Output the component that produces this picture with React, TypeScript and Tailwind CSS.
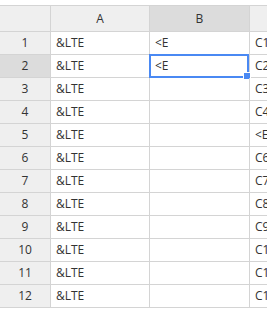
import React from 'react';

const ROWS = Array.from({ length: 12 }, (_, i) => i + 1);

function cellC(row: number) {
  if (row === 5) return '<E';
  return `C${row}`;
}

export default function App() {
  const selectedRow = 2;

  return (
    <div className="w-[267px] h-[309px] bg-white overflow-hidden pt-[5px] font-['Open_Sans',sans-serif] text-[12px] text-[#333]">
      <div className="grid grid-cols-[51px_99px_100px_1fr] border-t border-[#d4d4d4]">
        {/* header row */}
        <div className="h-[26px] bg-[#efefef] border-r border-b border-[#d4d4d4]" />
        <div className="h-[26px] bg-[#efefef] border-r border-b border-[#d4d4d4] flex items-center justify-center">A</div>
        <div className="h-[26px] bg-[#dcdcdc] border-r border-b border-[#d4d4d4] flex items-center justify-center">B</div>
        <div className="h-[26px] bg-[#efefef] border-b border-[#d4d4d4]" />

        {ROWS.map((row) => {
          const sel = row === selectedRow;
          return (
            <React.Fragment key={row}>
              <div
                className={`h-[23px] border-r border-b border-[#d4d4d4] flex items-center justify-center ${
                  sel ? 'bg-[#dcdcdc]' : 'bg-[#efefef]'
                }`}
              >
                {row}
              </div>
              <div className="h-[23px] border-r border-b border-[#d4d4d4] flex items-center pl-[5px] whitespace-nowrap overflow-hidden">
                &amp;LTE
              </div>
              <div className="relative h-[23px] border-r border-b border-[#d4d4d4] flex items-center pl-[5px] whitespace-nowrap">
                {row <= 2 ? '<E' : ''}
                {sel && (
                  <>
                    <div className="absolute left-[-1px] top-[-1px] w-[100px] h-[24px] border-2 border-[#4a89f3] pointer-events-none" />
                    <div className="absolute right-[-2px] bottom-[-3px] w-[6px] h-[6px] bg-[#4a89f3] border border-white box-content" />
                  </>
                )}
              </div>
              <div className="h-[23px] border-b border-[#d4d4d4] flex items-center pl-[5px] whitespace-nowrap overflow-hidden">
                {cellC(row)}
              </div>
            </React.Fragment>
          );
        })}
      </div>
    </div>
  );
}
